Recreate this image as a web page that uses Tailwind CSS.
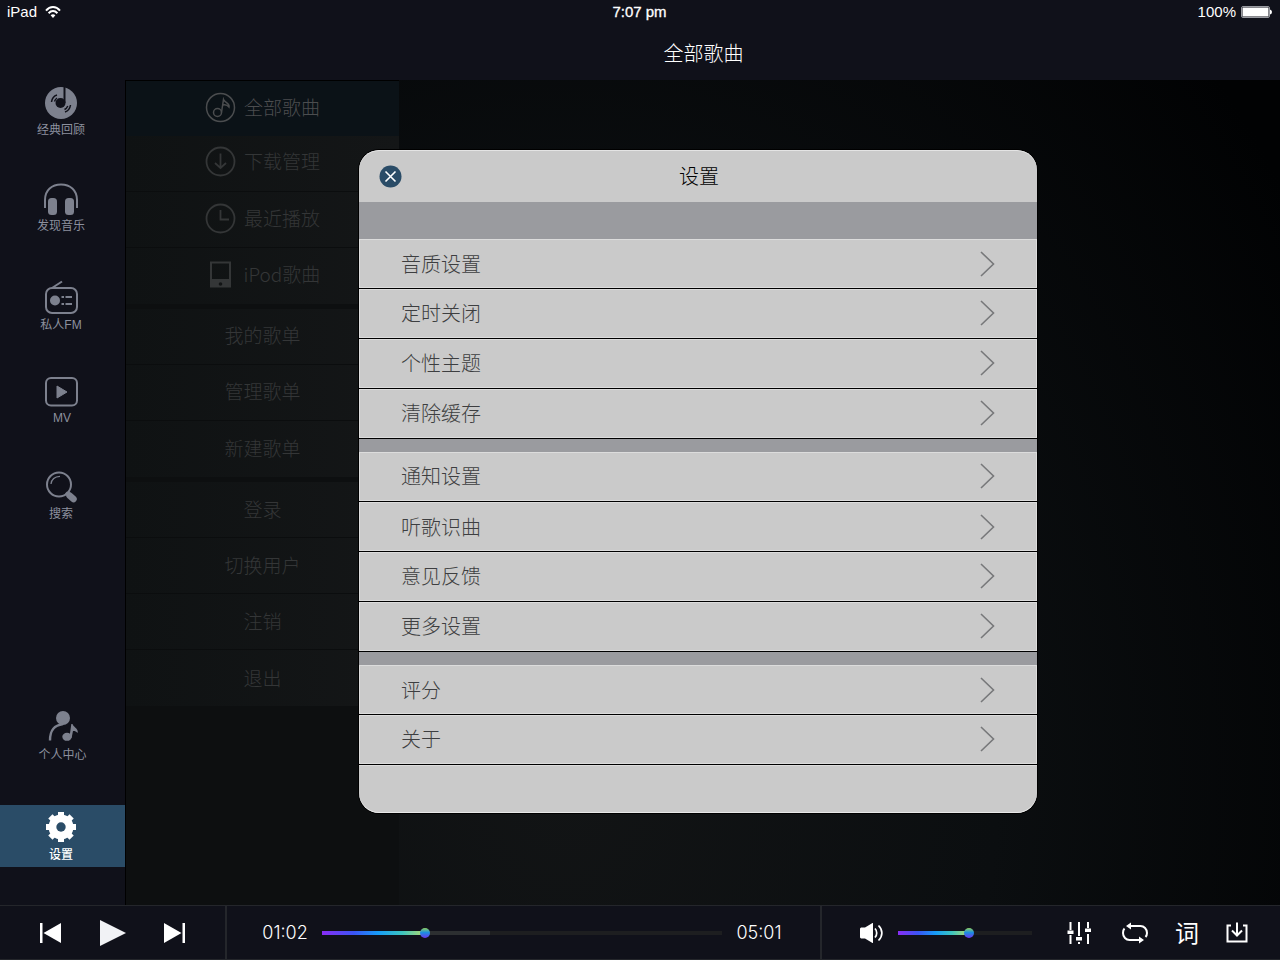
<!DOCTYPE html>
<html lang="zh-CN">
<head>
<meta charset="utf-8">
<meta name="viewport" content="width=device-width, initial-scale=1">
<title>设置</title>
<script src="https://cdn.jsdelivr.net/npm/@tailwindcss/browser@4"></script>
</head>
<body class="relative flex min-h-screen flex-col bg-[#10111a] font-['Noto_Sans_CJK_SC',sans-serif] text-white">

<header class="flex h-20 flex-col">
  <div class="grid h-6 grid-cols-3 items-center pl-[7px] pr-2 font-['Liberation_Sans',sans-serif] text-[15px] leading-6">
    <div class="flex items-center gap-2">
      <span>iPad</span>
      <svg class="h-[13px] w-4" viewBox="0 0 16 13" fill="none" stroke="#fff" stroke-width="2" role="img" aria-label="Wi-Fi"><path d="M1 4.6C5-.1 11-.1 15 4.6M3.6 7.2C6.200 4.400 9.800 4.400 12.400 7.200"/><path d="M5.600 9.300C7 8 9 8 10.400 9.300L8 12Z" fill="#fff" stroke="none"/></svg>
    </div>
    <time class="text-center [-webkit-text-stroke:0.3px_white]">7:07 pm</time>
    <div class="flex items-center justify-end gap-[5px]">
      <span>100%</span>
      <svg class="h-3 w-[31px]" viewBox="0 0 31 12" role="img" aria-label="电池"><rect x=".5" y=".5" width="28" height="11" rx="1.500" fill="none" stroke="#999ba1"/><rect x="1.500" y="1.500" width="26" height="9" rx=".5" fill="#fff"/><path d="M29 3.500q2 .5 2 2.500t-2 2.500z" fill="#fff"/></svg>
    </div>
  </div>
  <h1 class="flex flex-1 items-center justify-center pl-[127px] pt-0.5 text-xl font-light">全部歌曲</h1>
</header>

<div class="flex flex-1">
  <nav class="flex w-[125px] shrink-0 flex-col pb-[38px] pt-px font-['Liberation_Sans','Noto_Sans_CJK_SC',sans-serif] text-[12px] leading-4 text-[#8c909e]" aria-label="主导航">
    <div class="flex flex-col gap-[34px]">
      <a href="#classic" class="flex h-[62px] flex-col items-center pr-[3px] pt-1.5">
        <svg class="size-8" viewBox="0 0 32 32"><circle cx="16" cy="16" r="16" fill="#7d818e"/><circle cx="15.500" cy="16" r="5" fill="#10111a"/><path d="M18.500 0h2v16h-2z" fill="#10111a"/><path d="M6.500 15C7 11.500 8.500 9 12 8M9.500 14.500C10 12.700 10.800 11.800 12 11M25.500 18C25 21.500 23 24 20 25M22.800 19C22 20.800 21 21.800 19.500 22.500" stroke="#10111a" stroke-width="1.500" fill="none"/></svg>
        <span class="mt-[3px]">经典回顾</span>
      </a>
      <a href="#discover" class="flex h-[62px] flex-col items-center pr-[3px] pt-1.5">
        <svg class="h-8 w-[34px]" viewBox="0 0 34 32" fill="#7d818e"><path d="M1 25V17C1 7 8 1.500 17 1.500S33 7 33 17v8" fill="none" stroke="#7d818e" stroke-width="2"/><rect x="4" y="15" width="9" height="17" rx="3.500"/><rect x="21" y="15" width="9" height="17" rx="3.500"/></svg>
        <span class="mt-[3px]">发现音乐</span>
      </a>
      <a href="#fm" class="flex h-[62px] flex-col items-center pr-[3px] pt-[7px]">
        <svg class="h-[34px] w-[33px]" viewBox="0 0 33 34" fill="none" stroke="#7d818e" stroke-width="2"><rect x="1" y="8" width="31" height="25" rx="6"/><path d="M7 8 17 1.500"/><circle cx="10" cy="20.500" r="5" fill="#7d818e" stroke="none"/><path d="M16.500 17h2.500M16.500 24h2.500M20.500 17h6.500M20.500 24h6.500"/></svg>
        <span class="mt-[3px]">私人FM</span>
      </a>
      <a href="#mv" class="flex h-[62px] flex-col items-center pr-[3px] pt-2">
        <svg class="h-[30px] w-[33px]" viewBox="0 0 33 30"><rect x="1" y="1" width="31" height="27.500" rx="5" fill="none" stroke="#7d818e" stroke-width="2"/><path d="M12 9v12l10-6z" fill="#7d818e" stroke="#7d818e" stroke-linejoin="round"/></svg>
        <span class="mt-[3px] pl-0.5">MV</span>
      </a>
      <a href="#search" class="flex h-[62px] flex-col items-center pr-[3px] pt-1.5">
        <svg class="h-8 w-[31px]" viewBox="0 0 31 32"><circle cx="13" cy="13.500" r="12" fill="none" stroke="#7d818e" stroke-width="2"/><path d="M5 13C5.500 8.500 8.500 5.500 14 5.300" fill="none" stroke="#7d818e" stroke-width="1.300"/><path d="M23.500 24.500 27.500 28" stroke="#7d818e" stroke-width="6.500" stroke-linecap="round"/><path d="M20 21.500 25 26" stroke="#7d818e" stroke-width="3"/></svg>
        <span class="mt-[3px]">搜索</span>
      </a>
    </div>
    <div class="mt-auto flex flex-col gap-[38px]">
      <a href="#me" class="flex h-[62px] flex-col items-center pt-1.5">
        <svg class="h-[30px] w-[30px]" viewBox="0 0 30 30" fill="#7d818e"><circle cx="15" cy="7" r="7"/><path d="M2 29.500C2 18.500 6.500 14.500 15 13" fill="none" stroke="#7d818e" stroke-width="2.400"/><ellipse cx="19" cy="25.800" rx="4.700" ry="4"/><path d="M21.500 26 23.300 13H24.500C25.500 16.500 31 17.500 29.500 22 27.800 20 26.500 19.800 25 20L23.600 27Z"/></svg>
        <span class="mt-1.5">个人中心</span>
      </a>
      <a href="#settings" aria-current="page" class="flex h-[62px] flex-col items-center bg-[#2a4c67] pr-[3px] pt-[7px] font-medium text-white">
        <svg class="size-[30px]" viewBox="0 0 30 30"><g fill="#fff"><circle cx="15" cy="15" r="12.500"/><rect x="12" y="0" width="6" height="30"/><rect x="12" y="0" width="6" height="30" transform="rotate(45 15 15)"/><rect x="12" y="0" width="6" height="30" transform="rotate(90 15 15)"/><rect x="12" y="0" width="6" height="30" transform="rotate(135 15 15)"/></g><circle cx="15" cy="15" r="4.700" fill="#2a4c67"/></svg>
        <span class="mt-[5px]">设置</span>
      </a>
    </div>
  </nav>

  <main class="flex flex-1 bg-[radial-gradient(ellipse_75%_130%_at_38%_85%,#121415_0%,#0b0e10_50%,#010203_100%)]">
    <div class="w-[274px] border-l border-t border-black bg-[#0d0f10] text-[19px] font-light text-[#343637]">
      <ul class="bg-gradient-to-r from-[#0f1213] to-[#141617]">
        <li><a href="#all" class="flex h-[55px] items-center justify-center gap-2 bg-[#0b1217] pb-0.5 text-[#4b4d4f]">
          <svg class="size-[31px]" viewBox="0 0 31 31" fill="none" stroke="currentColor" stroke-width="1.500"><circle cx="15.500" cy="15.500" r="14"/><circle cx="12.500" cy="20.500" r="4"/><path d="M16.500 20.500 18.500 7.500C20 11 25 11 24 15 22 12.500 20 12.500 18 13"/></svg>全部歌曲</a></li>
        <li><a href="#downloads" class="flex h-14 items-center justify-center gap-2 border-b border-[#0b0d0e] pb-1">
          <svg class="size-[31px]" viewBox="0 0 31 31" fill="none" stroke="currentColor" stroke-width="1.800"><circle cx="15.500" cy="15.500" r="14"/><path d="M15.500 7.500V21.500M10 17l5.500 5 5.500-5"/></svg>下载管理</a></li>
        <li><a href="#recent" class="flex h-14 items-center justify-center gap-2 border-b border-[#0b0d0e] pb-0.5">
          <svg class="size-[31px]" viewBox="0 0 31 31" fill="none" stroke="currentColor" stroke-width="1.800"><circle cx="15.500" cy="15.500" r="14"/><path d="M15.500 7V16.500H24"/></svg>最近播放</a></li>
        <li><a href="#ipod" class="flex h-14 items-center justify-center gap-2 pb-1">
          <svg class="h-[31px] w-[31px]" viewBox="0 0 31 31"><path fill="currentColor" fill-rule="evenodd" d="M5 2.500h21v26H5ZM7 4.500v15.500h17V4.500Z"/><circle cx="15.500" cy="25" r="1.800" fill="#121415"/></svg>iPod歌曲</a></li>
      </ul>
      <ul class="mt-[5px] bg-gradient-to-r from-[#0f1213] to-[#141617]">
        <li><a href="#mine" class="flex h-14 items-center justify-center border-b border-[#0b0d0e] pb-0.5">我的歌单</a></li>
        <li><a href="#manage" class="flex h-14 items-center justify-center border-b border-[#0b0d0e] pb-0.5">管理歌单</a></li>
        <li><a href="#new" class="flex h-14 items-center justify-center pb-0.5">新建歌单</a></li>
      </ul>
      <ul class="mt-[5px] bg-gradient-to-r from-[#0f1213] to-[#141617]">
        <li><a href="#login" class="flex h-14 items-center justify-center border-b border-[#0b0d0e]">登录</a></li>
        <li><a href="#switch" class="flex h-14 items-center justify-center border-b border-[#0b0d0e]">切换用户</a></li>
        <li><a href="#logout" class="flex h-14 items-center justify-center border-b border-[#0b0d0e]">注销</a></li>
        <li><a href="#exit" class="flex h-14 items-center justify-center">退出</a></li>
      </ul>
    </div>
  </main>
</div>

<footer class="flex h-[55px] border-y border-[#24262b]">
  <div class="flex w-[227px] shrink-0 items-center justify-between border-r-2 border-[#24262b] pl-10 pr-10">
    <button type="button" aria-label="上一首"><svg class="h-5 w-[21px]" viewBox="0 0 21 20" fill="#fff"><path d="M0 0h2.500v20H0zM21 0v20L3.500 10z"/></svg></button>
    <button type="button" aria-label="播放"><svg class="h-[26px] w-[26px]" viewBox="0 0 26 26" fill="#f1f2f5"><path d="M0 0 26 13 0 26z"/></svg></button>
    <button type="button" aria-label="下一首"><svg class="h-5 w-[21px]" viewBox="0 0 21 20" fill="#fff"><path d="M18.500 0h2.500v20h-2.500zM0 0v20L17.500 10z"/></svg></button>
  </div>
  <div class="flex flex-1 items-center gap-[13px] border-r-2 border-[#24262b] pl-[34px] pr-[37px] font-['Inter','Roboto',sans-serif] text-[18px] font-light">
    <span class="w-12 text-center">01:02</span>
    <input type="range" min="0" max="100" value="25" aria-label="播放进度" class="h-2.5 min-w-0 flex-1 appearance-none bg-transparent [&::-webkit-slider-runnable-track]:h-1 [&::-webkit-slider-runnable-track]:bg-[linear-gradient(90deg,#8a2cf5_0%,#3a55f5_8%,#169cf8_14%,#3cc4c0_20%,#b8dc6a_26%,#2c2f31_26%,#2c2f31_42%,#1d1e20_42%)] [&::-webkit-slider-thumb]:-mt-[3px] [&::-webkit-slider-thumb]:size-2.5 [&::-webkit-slider-thumb]:appearance-none [&::-webkit-slider-thumb]:rounded-full [&::-webkit-slider-thumb]:bg-[linear-gradient(180deg,#8fcf60,#1c8fe0_45%,#6a35f0)]">
    <span class="w-12 text-center">05:01</span>
  </div>
  <div class="flex w-[458px] shrink-0 items-center pl-[38px] pr-8">
    <button type="button" aria-label="静音"><svg class="h-5 w-[23px]" viewBox="0 0 23 20" fill="#fff"><path d="M0 5.500 1 4.500H5L12.500 0H13V20H12.500L5 15.500H1L0 14.500Z"/><path d="M15 5.500C17.300 8 17.300 12 15 14.500M18.500 2.500C23 7 23 13 18.500 17.500" fill="none" stroke="#fff" stroke-width="1.700"/></svg></button>
    <input type="range" min="0" max="100" value="53" aria-label="音量" class="ml-[15px] h-2.5 w-[134px] appearance-none bg-transparent [&::-webkit-slider-runnable-track]:h-1 [&::-webkit-slider-runnable-track]:bg-[linear-gradient(90deg,#8a2cf5_0%,#3a55f5_15%,#169cf8_28%,#3cc4c0_40%,#b8dc6a_53%,#1d1e20_53%)] [&::-webkit-slider-thumb]:-mt-[3px] [&::-webkit-slider-thumb]:size-2.5 [&::-webkit-slider-thumb]:appearance-none [&::-webkit-slider-thumb]:rounded-full [&::-webkit-slider-thumb]:bg-[linear-gradient(180deg,#8fcf60,#1c8fe0_45%,#6a35f0)]">
    <div class="ml-auto flex items-center gap-[27px]">
      <button type="button" aria-label="均衡器" class="mr-1"><svg class="h-6 w-6" viewBox="0 0 24 24" fill="#fff"><path d="M2.500 1h2v8h-2zM2.500 14h2v9h-2zM.5 9.500h6V13h-6zM11 1h2v14h-2zM9 16h6v3.500H9zM11 21h2v2h-2zM20 1h2v6h-2zM20 13h2v10h-2zM18 7.500h6V11h-6z"/></svg></button>
      <button type="button" aria-label="循环播放"><svg class="h-6 w-[26px]" viewBox="0 0 26 24"><path d="M7 5H18.500C22 5 25 8 25 12 25 14 24.500 15 23.500 16M20 19H7.500C4 19 1 16 1 12 1 10 1.500 8.500 2.500 7.500" fill="none" stroke="#fff" stroke-width="2"/><path d="M4 5 9 1.500V8.500ZM22 19 17 15.500V22.500Z" fill="#fff"/></svg></button>
      <button type="button" aria-label="歌词" class="pb-0.5 text-[24px] leading-6">词</button>
      <button type="button" aria-label="下载"><svg class="h-6 w-[22px]" viewBox="0 0 22 24" fill="none" stroke="#fff" stroke-width="2"><path d="M5 4.500H1.500V20.500H20.500V4.500H17M11 1.500V14M6 9.500 11 14.500 16 9.500"/></svg></button>
    </div>
  </div>
</footer>

<div class="pointer-events-none absolute inset-0 flex items-center justify-center pl-[116px] pt-[3px]">
  <section role="dialog" aria-labelledby="dialog-title" class="pointer-events-auto w-[678px] overflow-hidden rounded-[20px] bg-[#9a9b9f] text-xl font-light text-[#3d3e40] shadow-[0_0_0_1px_#000]">
    <div class="relative flex h-[52px] items-center justify-center rounded-t-[20px] bg-[#cacaca] pl-0.5 text-black shadow-[inset_0_1px_0_#e4e4e4]">
      <button type="button" aria-label="关闭" class="absolute left-5 top-[15px]"><svg class="size-[23px]" viewBox="0 0 23 23"><circle cx="11.500" cy="11.500" r="11" fill="#2a4c67"/><path d="m6.500 6.500 10 10M16.500 6.500l-10 10" stroke="#fff" stroke-width="1.600"/></svg></button>
      <h2 id="dialog-title">设置</h2>
    </div>
    <ul class="mt-[37px]">
      <li><button type="button" class="flex h-[50px] w-full items-center justify-between border-b border-black bg-[#cacaca] pl-[42px] pr-[42px] shadow-[inset_0_0_0_1px_#dcdcdc]">音质设置<svg class="h-[26px] w-[15px]" viewBox="0 0 15 26" fill="none" stroke="#77787a" stroke-width="1.600"><path d="M1 1 13.500 13 1 25"/></svg></button></li>
      <li><button type="button" class="flex h-[50px] w-full items-center justify-between border-b border-black bg-[#cacaca] pb-px pl-[42px] pr-[42px] shadow-[inset_0_0_0_1px_#dcdcdc]">定时关闭<svg class="h-[26px] w-[15px]" viewBox="0 0 15 26" fill="none" stroke="#77787a" stroke-width="1.600"><path d="M1 1 13.500 13 1 25"/></svg></button></li>
      <li><button type="button" class="flex h-[50px] w-full items-center justify-between border-b border-black bg-[#cacaca] pb-px pl-[42px] pr-[42px] shadow-[inset_0_0_0_1px_#dcdcdc]">个性主题<svg class="h-[26px] w-[15px]" viewBox="0 0 15 26" fill="none" stroke="#77787a" stroke-width="1.600"><path d="M1 1 13.500 13 1 25"/></svg></button></li>
      <li><button type="button" class="flex h-[50px] w-full items-center justify-between border-b border-black bg-[#cacaca] pb-0.5 pl-[42px] pr-[42px] shadow-[inset_0_0_0_1px_#dcdcdc]">清除缓存<svg class="h-[26px] w-[15px]" viewBox="0 0 15 26" fill="none" stroke="#77787a" stroke-width="1.600"><path d="M1 1 13.500 13 1 25"/></svg></button></li>
    </ul>
    <ul class="mt-[13px]">
      <li><button type="button" class="flex h-[50px] w-full items-center justify-between border-b border-black bg-[#cacaca] pb-px pl-[42px] pr-[42px] shadow-[inset_0_0_0_1px_#dcdcdc]">通知设置<svg class="h-[26px] w-[15px]" viewBox="0 0 15 26" fill="none" stroke="#77787a" stroke-width="1.600"><path d="M1 1 13.500 13 1 25"/></svg></button></li>
      <li><button type="button" class="flex h-[50px] w-full items-center justify-between border-b border-black bg-[#cacaca] pl-[42px] pr-[42px] shadow-[inset_0_0_0_1px_#dcdcdc]">听歌识曲<svg class="h-[26px] w-[15px]" viewBox="0 0 15 26" fill="none" stroke="#77787a" stroke-width="1.600"><path d="M1 1 13.500 13 1 25"/></svg></button></li>
      <li><button type="button" class="flex h-[50px] w-full items-center justify-between border-b border-black bg-[#cacaca] pb-px pl-[42px] pr-[42px] shadow-[inset_0_0_0_1px_#dcdcdc]">意见反馈<svg class="h-[26px] w-[15px]" viewBox="0 0 15 26" fill="none" stroke="#77787a" stroke-width="1.600"><path d="M1 1 13.500 13 1 25"/></svg></button></li>
      <li><button type="button" class="flex h-[50px] w-full items-center justify-between border-b border-black bg-[#cacaca] pb-0.5 pl-[42px] pr-[42px] shadow-[inset_0_0_0_1px_#dcdcdc]">更多设置<svg class="h-[26px] w-[15px]" viewBox="0 0 15 26" fill="none" stroke="#77787a" stroke-width="1.600"><path d="M1 1 13.500 13 1 25"/></svg></button></li>
    </ul>
    <ul class="mt-[13px]">
      <li><button type="button" class="flex h-[50px] w-full items-center justify-between border-b border-black bg-[#cacaca] pl-[42px] pr-[42px] shadow-[inset_0_0_0_1px_#dcdcdc]">评分<svg class="h-[26px] w-[15px]" viewBox="0 0 15 26" fill="none" stroke="#77787a" stroke-width="1.600"><path d="M1 1 13.500 13 1 25"/></svg></button></li>
      <li><button type="button" class="flex h-[50px] w-full items-center justify-between border-b border-black bg-[#cacaca] pb-px pl-[42px] pr-[42px] shadow-[inset_0_0_0_1px_#dcdcdc]">关于<svg class="h-[26px] w-[15px]" viewBox="0 0 15 26" fill="none" stroke="#77787a" stroke-width="1.600"><path d="M1 1 13.500 13 1 25"/></svg></button></li>
    </ul>
    <div class="h-12 rounded-b-[20px] bg-[#cacaca] shadow-[inset_0_-1px_0_#e8e8e8,inset_0_1px_0_#dcdcdc]"></div>
  </section>
</div>
</body>
</html>
